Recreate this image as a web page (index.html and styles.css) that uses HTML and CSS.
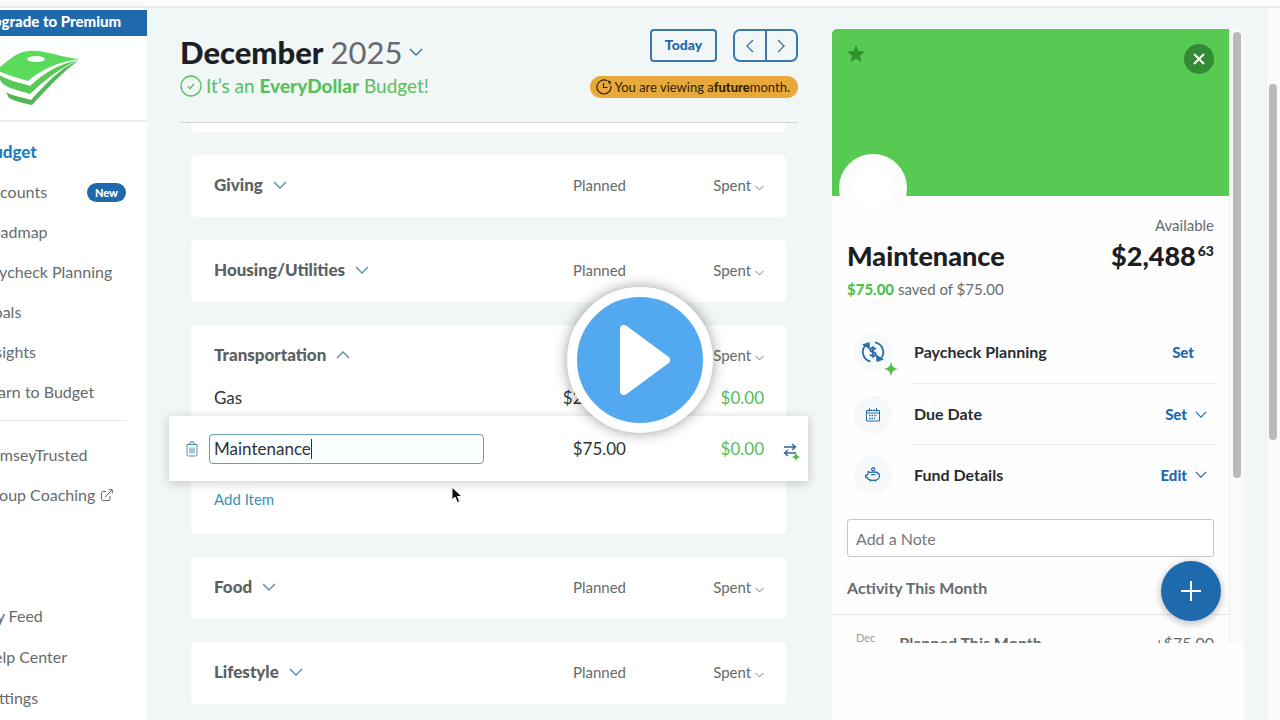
FILE: index.html
```html
<!DOCTYPE html>
<html lang="en">
<head>
  <meta charset="UTF-8" />
  <meta name="viewport" content="width=device-width, initial-scale=1.0"/>
  <title>EveryDollar Budget</title>
  <link rel="stylesheet" href="styles.css">
</head>
<body>

<!-- Shared icons -->
<svg class="sprite" aria-hidden="true">
  <symbol id="chevron" viewBox="0 0 14 8">
    <path d="M1 1l6 6 6-6" fill="none" stroke="currentColor" stroke-width="1.4"/>
  </symbol>
  <symbol id="sparkle" viewBox="0 0 16 16">
    <path d="M8 0C8.6 5.2 10.400 7.300 16 8C10.400 8.700 8.600 10.800 8 16C7.400 10.800 5.600 8.700 0 8C5.600 7.300 7.400 5.200 8 0z" fill="currentColor"/>
  </symbol>
</svg>

<div class="top-strip"></div>

<div class="app">

  <!-- Sidebar -->
  <aside class="sidebar">
    <a class="premium" href="#">Upgrade to Premium</a>
    <div class="logo">
      <svg width="98" height="58" viewBox="0 0 98 58" aria-label="EveryDollar">
        <path d="M14 21C25 13 34 3 46 2C62 0 76 8 98 10C76 13 60 20 46 32C36 29 25 26 14 21z" fill="#5bdb5c"/>
        <path d="M14 24C26 32 37 33 48 37C63 23 77 15 97 11C79 18 64 30 48 45C38 42 25 39 20 34z" fill="#57c957"/>
        <path d="M24 43C33 48 41 48 49 51C63 36 76 20 96 12C78 25 64 41 50 56C41 54 32 52 27 49z" fill="#52b855"/>
        <ellipse cx="54" cy="10" rx="9" ry="3" fill="#fff"/>
      </svg>
    </div>
    <nav class="menu">
      <a class="active" href="#">Budget</a>
      <a href="#">Accounts <span class="badge">New</span></a>
      <a href="#">Roadmap</a>
      <a href="#">Paycheck Planning</a>
      <a href="#">Goals</a>
      <a href="#">Insights</a>
      <a href="#">Learn to Budget</a>
    </nav>
    <nav class="menu menu-more">
      <a href="#">RamseyTrusted</a>
      <a href="#">Group Coaching
        <svg class="external" width="12" height="12" viewBox="0 0 12 12" fill="none" stroke="currentColor">
          <path d="M5 2.500H1.500a1 1 0 0 0-1 1v7a1 1 0 0 0 1 1H8a1 1 0 0 0 1-1V7M4 8l7-7M7.500.7h3.800v3.800"/>
        </svg>
      </a>
    </nav>
    <nav class="menu menu-bottom">
      <a href="#">My Feed</a>
      <a href="#">Help Center</a>
      <a href="#">Settings</a>
    </nav>
  </aside>

  <!-- Budget -->
  <main class="budget">
    <header class="budget-header">
      <div class="month">
        <h1>December <span>2025</span> <svg width="14" height="8"><use href="#chevron"/></svg></h1>
        <p>
          <svg width="22" height="22" viewBox="0 0 22 22" fill="none" stroke="currentColor" stroke-width="1.300">
            <circle cx="11" cy="11" r="10"/><path d="M8 11.500l2 2 4-4.500"/>
          </svg>
          <span>It’s an <b>EveryDollar</b> Budget!</span>
        </p>
      </div>
      <div class="month-tools">
        <div class="month-buttons">
          <button class="today">Today</button>
          <div class="pager">
            <button aria-label="Previous month"><svg class="left" width="14" height="8"><use href="#chevron"/></svg></button>
            <button aria-label="Next month"><svg class="right" width="14" height="8"><use href="#chevron"/></svg></button>
          </div>
        </div>
        <div class="notice">
          <svg width="16" height="16" viewBox="0 0 16 16" fill="none" stroke="currentColor" stroke-width="1.200">
            <path d="M10.800 1.600A7 7 0 1 0 14.900 7M7.500 4v4.500h4"/><path d="M11 1l4 1.500-1 3.500z" fill="currentColor" stroke="none"/>
          </svg>
          <span>You are viewing a<b>future</b>month.</span>
        </div>
      </div>
    </header>

    <div class="groups">
      <section class="group-tail"></section>

      <section class="group">
        <div class="row group-head">
          <h2>Giving <svg width="14" height="8"><use href="#chevron"/></svg></h2>
          <span class="amount">Planned</span>
          <span class="amount">Spent <svg width="9" height="6"><use href="#chevron"/></svg></span>
        </div>
      </section>

      <section class="group">
        <div class="row group-head">
          <h2>Housing/Utilities <svg width="14" height="8"><use href="#chevron"/></svg></h2>
          <span class="amount">Planned</span>
          <span class="amount">Spent <svg width="9" height="6"><use href="#chevron"/></svg></span>
        </div>
      </section>

      <section class="group">
        <div class="row group-head">
          <h2>Transportation <svg class="up" width="14" height="8"><use href="#chevron"/></svg></h2>
          <span class="amount">Planned</span>
          <span class="amount">Spent <svg width="9" height="6"><use href="#chevron"/></svg></span>
        </div>
        <div class="row item">
          <span>Gas</span>
          <span class="amount">$200.00</span>
          <span class="amount spent">$0.00</span>
        </div>
        <div class="row item editing">
          <button class="trash" aria-label="Delete item">
            <svg width="12" height="16" viewBox="0 0 12 16" fill="none" stroke="currentColor">
              <path d="M.5 3.500h11M3.500 3.500v-1.500h1.500v-1.500h2v1.500h1.500v1.500M1 4v9.500a1.500 1.500 0 0 0 1.500 1.500h7a1.500 1.500 0 0 0 1.500-1.500V4M4 6.500v6M6 6.500v6M8 6.500v6"/>
            </svg>
          </button>
          <div class="name-box"><input type="text" value="Maintenance" aria-label="Item name"><i class="caret"></i></div>
          <span class="amount">$75.00</span>
          <span class="amount spent">$0.00</span>
          <button class="transfer" aria-label="Transfer money">
            <svg width="18" height="20" viewBox="0 0 18 20">
              <path d="M1 5h11M9 2l3.500 3L9 8M13 11H2M5 8l-3.500 3L5 14" fill="none" stroke="#28679b" stroke-width="1.400"/>
              <use href="#sparkle" x="8" y="10" width="10" height="10" color="#4fb84b"/>
            </svg>
          </button>
        </div>
        <a class="add-item" href="#">Add Item</a>
      </section>

      <section class="group">
        <div class="row group-head">
          <h2>Food <svg width="14" height="8"><use href="#chevron"/></svg></h2>
          <span class="amount">Planned</span>
          <span class="amount">Spent <svg width="9" height="6"><use href="#chevron"/></svg></span>
        </div>
      </section>

      <section class="group">
        <div class="row group-head">
          <h2>Lifestyle <svg width="14" height="8"><use href="#chevron"/></svg></h2>
          <span class="amount">Planned</span>
          <span class="amount">Spent <svg width="9" height="6"><use href="#chevron"/></svg></span>
        </div>
      </section>
    </div>
  </main>

  <!-- Item details -->
  <aside class="panel">
    <div class="panel-view">
      <div class="panel-body">
        <div class="cover">
          <button class="favorite" aria-label="Favorite">
            <svg width="18" height="18" viewBox="0 0 18 18"><path d="M9 0l2.500 6 6.500.5-5 4.200 1.600 6.300L9 13.600 3.400 17 5 10.700 0 6.500 6.500 6z" fill="currentColor"/></svg>
          </button>
          <button class="close" aria-label="Close">
            <svg width="12" height="12" viewBox="0 0 12 12"><path d="M1 1l10 10M11 1L1 11" stroke="currentColor" stroke-width="2"/></svg>
          </button>
          <div class="avatar"></div>
        </div>

        <div class="details">
          <div class="available">Available</div>
          <div class="summary">
            <h2>Maintenance</h2>
            <div class="total">$2,488<sup>63</sup></div>
          </div>
          <p class="saved"><b>$75.00</b> saved of $75.00</p>

          <ul class="settings">
            <li>
              <span class="icon">
                <svg width="24" height="24" viewBox="0 0 24 24" fill="none" stroke="currentColor" stroke-width="1.800">
                  <path d="M9.500 21.500A10 10 0 0 1 4.500 5M14 2.300A10 10 0 0 1 19.500 19"/>
                  <path d="M1 4.500L8.500 2l.5 7.500zM23 19.500l-7.500 2.500-.5-7.500z" fill="currentColor" stroke="none"/>
                  <path d="M14.800 9.500c-.5-1-1.500-1.500-2.800-1.500-3.500 0-3.700 3.300-.2 3.900 4 .7 3.700 4.100.2 4.100-1.500 0-2.500-.600-3-1.600M12 6.300v11.400"/>
                </svg>
                <svg class="spark" width="16" height="16"><use href="#sparkle"/></svg>
              </span>
              <div class="setting"><span>Paycheck Planning</span><button class="no-arrow">Set</button></div>
            </li>
            <li>
              <span class="icon">
                <svg width="14" height="14" viewBox="0 0 14 14" fill="none" stroke="currentColor">
                  <path d="M.5 2.500h13v10.500H.5zM.5 5h13M3.500 0v3.500M10.500 0v3.500M5.500 1.500v1M8.500 1.500v1"/>
                  <path d="M3 7.500h8M3 10.500h6" stroke-width="1.500" stroke-dasharray="1.500 1"/>
                </svg>
              </span>
              <div class="setting"><span>Due Date</span><button>Set <svg width="12" height="7"><use href="#chevron"/></svg></button></div>
            </li>
            <li>
              <span class="icon">
                <svg width="16" height="15" viewBox="0 0 16 15" fill="none" stroke="currentColor" stroke-width="1.300">
                  <path d="M5 5.500L3.200 4.600v1.900C2.300 7 1.900 7.700 1.700 8.400H.7v2h1.200c1 1.900 3.200 3 6.100 3 3.900 0 6.600-1.800 6.600-4.300S12 5 8.500 5C7 5 6 5.200 5 5.500zM6 7.600h4.500M5 13v1.500M11 13v1.500"/>
                  <circle cx="8.200" cy="2.200" r="1.500"/>
                </svg>
              </span>
              <div class="setting"><span>Fund Details</span><button>Edit <svg width="12" height="7"><use href="#chevron"/></svg></button></div>
            </li>
          </ul>

          <input class="note" type="text" placeholder="Add a Note" aria-label="Add a Note">
          <h3>Activity This Month</h3>
        </div>

        <div class="activity">
          <span class="date">Dec</span>
          <span class="what">Planned This Month</span>
          <span>+$75.00</span>
        </div>
      </div>
      <div class="track panel-track"><div class="thumb"></div></div>
    </div>
    <button class="fab" aria-label="Add transaction">
      <svg width="22" height="22" viewBox="0 0 22 22"><path d="M11 1v20M1 11h20" stroke="currentColor" stroke-width="2"/></svg>
    </button>
  </aside>

  <div class="track page-track"><div class="thumb"></div></div>
</div>

<!-- Video overlay -->
<svg class="cursor" width="12" height="18" viewBox="0 0 12 18">
  <path d="M1 1v13l3-3 2.300 5.500 2.500-1L6.500 10.500H11z" fill="#111" stroke="#fff"/>
</svg>
<button class="play" aria-label="Play video">
  <svg width="52" height="70" viewBox="0 0 52 70"><path d="M5 4L47 35 5 66z" fill="#fff" stroke="#fff" stroke-width="8" stroke-linejoin="round"/></svg>
</button>

</body>
</html>
```
FILE: styles.css
```css
* {
  box-sizing: border-box;
}

body {
  margin: 0;
  height: 100vh;
  overflow: hidden;
  display: flex;
  flex-direction: column;
  background-color: #f1f6f7;
  font-family: Lato, sans-serif;
  font-size: 16px;
  line-height: 22px;
  color: #666b6d;
}

a {
  color: inherit;
  text-decoration: none;
}

h1, h2, h3, p, ul {
  margin: 0;
  padding: 0;
}

button {
  padding: 0;
  border: none;
  background: none;
  font: inherit;
  color: #1f69ad;
  cursor: pointer;
}

.sprite {
  position: absolute;
  width: 0;
  height: 0;
}

.top-strip {
  flex: none;
  height: 8px;
  background-color: #fafbfa;
  border-bottom: 2px solid #e9ebea;
}

.app {
  flex: 1;
  min-height: 0;
  display: flex;
}

/* Sidebar */
.sidebar {
  flex: none;
  width: 165px;
  margin-left: -18px;
  padding-top: 2px;
  background-color: #fff;
  white-space: nowrap;
}

.premium {
  display: block;
  height: 26px;
  background-color: #1f69ad;
  color: #fff;
  font-size: 15px;
  font-weight: 900;
}

.logo {
  height: 86px;
  padding-top: 13px;
  border-bottom: 2px solid #ededed;
}

.menu {
  display: flex;
  flex-direction: column;
  margin-right: 21px;
  padding-top: 10px;
}

.menu a {
  display: flex;
  align-items: center;
  height: 40px;
}

.menu .active {
  color: #2180bd;
  font-size: 17px;
  font-weight: 900;
}

.badge {
  margin-left: auto;
  padding: 0 8px;
  border-radius: 10px;
  background-color: #1f69ad;
  color: #fff;
  font-size: 11px;
  font-weight: 900;
  line-height: 19px;
}

.menu-more {
  margin-top: 8px;
  padding-top: 14px;
  border-top: 1px solid #e8eaea;
}

.external {
  margin-left: 6px;
}

.menu-bottom {
  padding-top: 81px;
  gap: 1px;
}

/* Budget */
.budget {
  flex: 1;
  min-width: 0;
  overflow: hidden;
}

.budget-header {
  display: flex;
  justify-content: space-between;
  height: 115px;
  margin: 0 34px 0 33px;
  padding-top: 21px;
  border-bottom: 1px solid #cfd5d6;
  white-space: nowrap;
}

.month h1 {
  display: flex;
  align-items: center;
  gap: 7px;
  color: #1d2022;
  font-size: 31px;
  font-weight: 900;
  line-height: 46px;
}

.month h1 span {
  color: #66696b;
  font-weight: 400;
}

.month h1 svg {
  color: #2f75aa;
}

.month p {
  display: flex;
  align-items: center;
  gap: 4px;
  color: #57c15a;
  font-size: 19px;
}

.month p b {
  font-weight: 900;
}

.month-tools {
  display: flex;
  flex-direction: column;
  align-items: flex-end;
  gap: 14px;
}

.month-buttons {
  display: flex;
  gap: 16px;
}

.today, .pager {
  height: 33px;
  border: 2px solid #3b77ab;
  border-radius: 4px;
}

.today {
  width: 67px;
  padding-bottom: 2px;
  font-size: 14px;
  font-weight: 900;
}

.pager {
  display: flex;
  width: 65px;
  border-radius: 7px;
}

.pager button {
  display: flex;
  flex: 1;
  align-items: center;
  justify-content: center;
  color: #48769b;
}

.pager button + button {
  border-left: 2px solid #3b77ab;
}

.left {
  transform: rotate(90deg);
}

.right {
  transform: rotate(-90deg);
}

.up {
  transform: rotate(180deg);
}

.notice {
  display: flex;
  align-items: center;
  gap: 3px;
  height: 22px;
  padding: 0 8px 0 6px;
  border-radius: 11px;
  background-color: #e8a93a;
  color: #2e2109;
  font-size: 13px;
}

.notice b {
  font-weight: 900;
}

.groups {
  display: flex;
  flex-direction: column;
  gap: 23px;
  margin: 0 46px 0 44px;
}

.group-tail {
  height: 9px;
  border-radius: 0 0 5px 5px;
  background-color: #fff;
}

.group {
  padding-bottom: 2px;
  border-radius: 5px;
  background-color: #fff;
}

.row {
  position: relative;
  display: grid;
  grid-template-columns: 1fr 100px 138px;
  align-items: center;
  padding: 0 22px 0 23px;
}

.amount {
  text-align: right;
}

.group-head {
  height: 60px;
  font-size: 15px;
}

.group-head h2 {
  display: flex;
  align-items: center;
  gap: 10px;
  color: #5b6063;
  font-size: 17px;
  font-weight: 900;
}

.group-head h2 svg {
  color: #5790a5;
}

.item {
  height: 25px;
  margin-bottom: 6px;
  color: #2f3335;
  font-size: 17px;
}

.item .spent {
  color: #55bd58;
}

.editing {
  height: 65px;
  margin: 0 -22px;
  padding: 0 44px 0 40px;
  background-color: #fff;
  box-shadow: 0 2px 10px rgba(0, 0, 0, 0.2);
  grid-template-columns: 275px 1fr 138px;
}

.name-box {
  position: relative;
}

.name-box input {
  display: block;
  width: 100%;
  height: 30px;
  padding: 0 4px;
  border: 1px solid #6b9db7;
  border-radius: 4px;
  background-color: #fcffff;
  color: #2f3335;
  font: inherit;
}

.caret {
  position: absolute;
  left: 102px;
  top: 5px;
  width: 1px;
  height: 20px;
  background-color: #333;
}

.trash {
  position: absolute;
  left: 17px;
  top: 25px;
  line-height: 0;
  color: #4f92ae;
}

.transfer {
  position: absolute;
  right: 7px;
  top: 26px;
  line-height: 0;
}

.add-item {
  display: block;
  padding: 7px 23px 22px;
  color: #3792b8;
  font-size: 15px;
}

/* Item details */
.panel {
  position: relative;
  flex: none;
  width: 412px;
  margin: 21px 22px 0 0;
  padding-bottom: 77px;
  border-radius: 5px 0 0 0;
  background-color: #fefefe;
}

.panel-view {
  display: flex;
  height: 100%;
  overflow: hidden;
}

.panel-body {
  flex: 1;
}

.cover {
  position: relative;
  height: 167px;
  border-radius: 5px 0 0 0;
  background-color: #57ca52;
}

.favorite {
  position: absolute;
  left: 15px;
  top: 16px;
  line-height: 0;
  color: #2f942f;
}

.close {
  position: absolute;
  top: 15px;
  right: 15px;
  width: 30px;
  height: 30px;
  border-radius: 50%;
  background-color: #338b35;
  color: #fff;
  line-height: 0;
}

.avatar {
  position: absolute;
  left: 7px;
  bottom: -26px;
  width: 68px;
  height: 68px;
  border: 13px solid #fcfcfc;
  border-radius: 50%;
  background-color: #fff;
}

.details {
  padding: 18px 15px 0;
}

.available {
  font-size: 15px;
  text-align: right;
}

.summary {
  display: flex;
  justify-content: space-between;
  color: #1d2022;
  font-size: 27px;
  font-weight: 900;
  line-height: 40px;
}

.summary h2 {
  font-size: inherit;
  font-weight: inherit;
}

.total sup {
  margin-left: 2px;
  font-size: 14px;
  line-height: 0;
}

.saved {
  margin-top: 2px;
  font-size: 15px;
}

.saved b {
  color: #4ec24e;
  font-weight: 900;
}

.settings {
  margin-top: 20px;
  list-style: none;
}

.settings li {
  display: flex;
  align-items: center;
  gap: 20px;
  margin-right: -2px;
}

.icon {
  position: relative;
  display: flex;
  flex: none;
  align-items: center;
  justify-content: center;
  width: 38px;
  height: 38px;
  margin-left: 7px;
  border-radius: 50%;
  background-color: #f5f9fb;
  color: #2a6ca4;
}

.spark {
  position: absolute;
  right: -7px;
  bottom: -6px;
  color: #53bf50;
}

.setting {
  flex: 1;
  display: flex;
  align-items: center;
  justify-content: space-between;
  height: 61px;
  padding-right: 9px;
  padding-left: 2px;
  border-bottom: 1px solid #eceeee;
  color: #292c2e;
  font-weight: 700;
}

li:first-child .setting {
  height: 64px;
}

li:last-child .setting {
  height: 59px;
  border-bottom: none;
}

.setting button {
  display: flex;
  align-items: center;
  gap: 8px;
  font-size: 15px;
  font-weight: 900;
}

.setting .no-arrow {
  margin-right: 13px;
}

.note {
  display: block;
  width: 100%;
  height: 38px;
  margin: 15px 0 20px;
  padding: 0 8px;
  border: 1px solid #c5c8c9;
  border-radius: 3px;
  background-color: #fff;
  font: inherit;
}

.note::placeholder {
  color: #75797b;
  opacity: 1;
}

.details h3 {
  font-size: 16px;
  font-weight: 700;
}

.activity {
  display: flex;
  gap: 24px;
  margin-top: 15px;
  padding: 17px 15px 0 24px;
  border-top: 1px solid #e4e6e6;
  white-space: nowrap;
}

.activity .date {
  font-size: 11px;
  line-height: 12px;
  color: #999;
}

.activity .what {
  flex: 1;
  font-weight: 700;
}

/* Scroll bars */
.track {
  flex: none;
  background-color: #fafafa;
  border-left: 1px solid #eeefef;
}

.panel-track {
  width: 15px;
  padding: 3px 3px 0;
}

.page-track {
  width: 14px;
  padding: 76px 2px 0;
}

.thumb {
  width: 8px;
  height: 73%;
  border-radius: 4px;
  background-color: #bababa;
}

.page-track .thumb {
  height: 56%;
}

.fab {
  position: absolute;
  right: 23px;
  bottom: 99px;
  width: 60px;
  height: 60px;
  border-radius: 50%;
  background-color: #1f69ad;
  box-shadow: 0 2px 8px rgba(0, 0, 0, 0.3);
  color: #fff;
  line-height: 0;
}

/* Video overlay */
.cursor {
  position: fixed;
  left: 451px;
  top: 486px;
}

.play {
  position: fixed;
  left: 50%;
  top: 50%;
  display: flex;
  align-items: center;
  justify-content: center;
  width: 146px;
  height: 146px;
  margin: -73px 0 0 -73px;
  padding-left: 10px;
  border: 10px solid #fff;
  border-radius: 50%;
  background-color: #52a9f0;
  box-shadow: 0 0 14px rgba(0, 0, 0, 0.4);
}
```
